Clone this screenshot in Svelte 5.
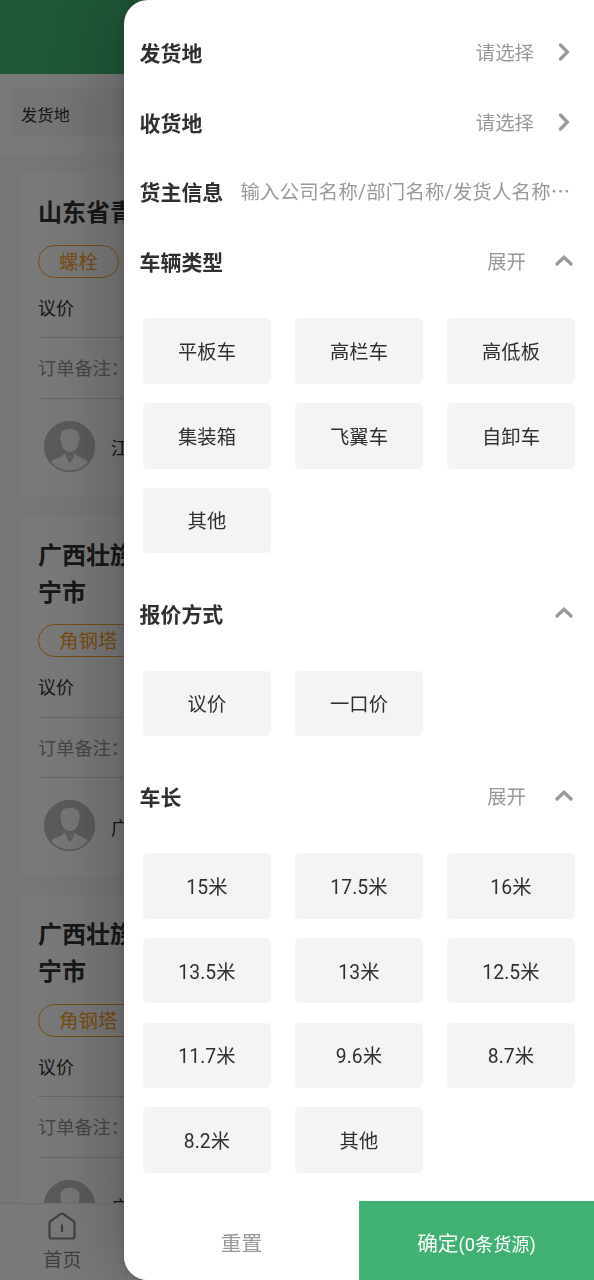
<script>
  let orders = [
    { id: 1, title: ['山东省青'], goods: '螺栓', owner: '江' },
    { id: 2, title: ['广西壮族', '宁市'], goods: '角钢塔', owner: '广' },
    { id: 3, title: ['广西壮族', '宁市'], goods: '角钢塔', owner: '广' },
  ];

  let places = ['发货地', '收货地'];

  let groups = $state([
    {
      name: '车辆类型',
      expand: true,
      options: ['平板车', '高栏车', '高低板', '集装箱', '飞翼车', '自卸车', '其他'],
      picked: -1,
    },
    { name: '报价方式', expand: false, options: ['议价', '一口价'], picked: -1 },
    {
      name: '车长',
      expand: true,
      options: ['15米', '17.5米', '16米', '13.5米', '13米', '12.5米', '11.7米', '9.6米', '8.7米', '8.2米', '其他'],
      picked: -1,
    },
  ]);

  let total = $state(0);

  function pick(group, i) {
    group.picked = group.picked === i ? -1 : i;
  }

  function reset() {
    groups.forEach((g) => (g.picked = -1));
  }
</script>

<div class="page">
  <div class="nav"></div>
  <div class="search">
    <div class="search-box">发货地</div>
  </div>

  <div class="list">
    {#each orders as order (order.id)}
      <div class="card">
        <div class="card-title">
          {#each order.title as line}
            <div>{line}</div>
          {/each}
        </div>
        <div class="tag">{order.goods}</div>
        <div class="card-row price">议价</div>
        <div class="card-row note">订单备注：</div>
        <div class="owner">
          <svg class="avatar" viewBox="0 0 50 50">
            <circle cx="25" cy="25" r="25" fill="#b9b9b9" />
            <path d="M25.500 7.500c6.500 0 9.700 3.600 9.400 9.500-.4 7.500-3.900 13.500-9.400 13.500S16.500 24.500 16.100 17c-.3-5.900 2.900-9.500 9.400-9.500z" fill="#f1f1f1" />
            <path d="M20 31.500q-1.500 3-6 4.500-5 1.700-7.200 4.500A24 24 0 0 0 43.500 40.500q-2.400-3-7-4.500-4.500-1.500-6.500-4.500l-4.700 1.500z" fill="#f1f1f1" />
            <path d="M20 31l3.500 8 1.500-4.500h1l1.500 4.500 3-8-2.500 1.500h-5zM24.500 34h2l1 4.500-2 3-2-3z" fill="#b9b9b9" />
            <circle cx="25" cy="25" r="24.300" fill="none" stroke="#b9b9b9" stroke-width="1.400" />
          </svg>
          <span>{order.owner}</span>
        </div>
      </div>
    {/each}
  </div>

  <div class="tabbar">
    <div class="tab">
      <svg viewBox="0 0 28 28">
        <path d="M2.700 9L12.800 1.900q1.200-.8 2.400 0L25.300 9q1.200.8 1.200 2.200V24.500q0 2-2 2h-21q-2 0-2-2V11.200Q1.500 9.800 2.700 9zM14 12.500v7.500" />
      </svg>
      <span>首页</span>
    </div>
  </div>
</div>

<div class="mask"></div>

<div class="drawer">
  <div class="drawer-body">
    {#each places as place}
      <div class="row">
        <span class="label">{place}</span>
        <span class="value">请选择</span>
        <svg class="arrow" viewBox="0 0 20 20"><path d="M6.500 3l6.800 7-6.800 7" /></svg>
      </div>
    {/each}

    <div class="row">
      <span class="label">货主信息</span>
      <span class="placeholder">输入公司名称/部门名称/发货人名称<i>…</i></span>
    </div>

    {#each groups as group}
      <div class="row">
        <span class="label">{group.name}</span>
        {#if group.expand}
          <span class="value toggle">展开</span>
        {/if}
        <svg class="arrow" viewBox="0 0 20 20"><path d="M3 13l7-6.800 7 6.800" /></svg>
      </div>
      <div class="chips">
        {#each group.options as option, i}
          <button type="button" class="chip" class:active={group.picked === i} onclick={() => pick(group, i)}>{option}</button>
        {/each}
      </div>
    {/each}
  </div>

  <div class="footer">
    <button type="button" class="reset" onclick={reset}>重置</button>
    <button type="button" class="confirm">确定<small>({total}条货源)</small></button>
  </div>
</div>

<style>
  :global(body) {
    margin: 0;
    overflow: hidden;
    font-family: Roboto, 'Noto Sans CJK SC', sans-serif;
    color: #303030;
  }

  button {
    border: 0;
    padding: 0;
    font: inherit;
    color: inherit;
  }

  .page {
    display: flex;
    flex-direction: column;
    height: 1280px;
    background: #f1f1f2;
    white-space: nowrap;
  }

  .nav {
    flex: none;
    height: 74px;
    background: #40b172;
  }

  .search {
    flex: none;
    height: 80px;
    box-sizing: border-box;
    padding: 15px 13px;
    background: #f6f6f6;
  }
  .search-box {
    height: 48px;
    line-height: 53px;
    padding-left: 8px;
    border-radius: 4px;
    background: #eee;
    font-size: 16.3px;
  }

  .list {
    flex: 1;
    min-height: 0;
    overflow: hidden;
    display: flex;
    flex-direction: column;
    gap: 19.5px;
    padding: 19px 19px 0;
  }

  .card {
    flex: none;
    padding: 22px 19px 0;
    border-radius: 6px;
    background: #f6f6f6;
  }
  .card-title {
    font-size: 24px;
    font-weight: 700;
    line-height: 37px;
  }
  .tag {
    display: inline-block;
    height: 31px;
    line-height: 34px;
    margin-top: 12.5px;
    padding: 0 20px;
    border: 1px solid #f39a2b;
    border-radius: 17px;
    color: #f39a2b;
    font-size: 19.5px;
    vertical-align: top;
  }
  .card-row {
    height: 59.5px;
    line-height: 62px;
    border-bottom: 1px solid #d2d2d2;
  }
  .price {
    line-height: 61px;
    font-size: 17.9px;
  }
  .note {
    color: #909090;
    font-size: 18.2px;
  }
  .owner {
    display: flex;
    align-items: center;
    gap: 16px;
    height: 97.500px;
    padding-left: 6px;
    font-size: 17.7px;
  }
  .avatar {
    width: 51px;
    height: 51px;
    margin-bottom: 2px;
  }

  .tabbar {
    flex: none;
    height: 77px;
    box-sizing: border-box;
    padding: 8px 43px 0;
    border-top: 1px solid #e3e3e3;
    background: #f6f6f6;
  }
  .tab {
    display: inline-flex;
    flex-direction: column;
    align-items: center;
    gap: 8px;
    color: #848484;
    font-size: 19.3px;
    line-height: 25px;
  }
  .tab svg {
    width: 28px;
    height: 28px;
    fill: none;
    stroke: #848484;
    stroke-width: 2.2;
  }

  .mask {
    position: fixed;
    inset: 0;
    background: rgba(0, 0, 0, 0.51);
  }

  .drawer {
    position: fixed;
    top: 0;
    right: 0;
    bottom: 0;
    width: 470px;
    display: flex;
    flex-direction: column;
    border-radius: 24px 0 0 24px;
    overflow: hidden;
    background: #fff;
    box-shadow:
      0 0 12px rgba(0, 0, 0, 0.15),
      0 0 90px rgba(0, 0, 0, 0.3);
  }
  .drawer-body {
    flex: 1;
    min-height: 0;
    padding: 17px 20px 0 15.6px;
  }

  .row {
    display: flex;
    align-items: center;
    height: 69.7px;
  }
  .label {
    font-size: 20.9px;
    font-weight: 700;
  }
  .value {
    margin-left: auto;
    margin-right: 20px;
    padding-bottom: 1px;
    color: #999;
    font-size: 19.4px;
  }
  .toggle {
    margin-right: 28px;
  }
  .placeholder {
    margin-left: 17.3px;
    padding-bottom: 1px;
    color: #999;
    font-size: 19.4px;
    letter-spacing: 0.2px;
    white-space: nowrap;
  }
  .placeholder i {
    font-family: 'Noto Sans CJK SC', sans-serif;
    font-style: normal;
  }
  .arrow {
    flex: none;
    width: 20px;
    height: 20px;
    fill: none;
    stroke: #999;
    stroke-width: 3.3;
    stroke-linecap: round;
  }
  .label + .arrow {
    margin-left: auto;
  }

  .chips {
    display: grid;
    grid-template-columns: repeat(3, 128px);
    grid-auto-rows: 65.5px;
    gap: 19.2px 24px;
    padding: 22.6px 0 25px 3.4px;
  }
  .chip {
    border-radius: 5px;
    background: #f4f4f4;
    font-size: 19.3px;
    letter-spacing: 0.1px;
  }
  .chip.active {
    background: #e3f5ea;
    color: #40b172;
  }

  .footer {
    flex: none;
    display: grid;
    grid-template-columns: 1fr 1fr;
    height: 79px;
    font-size: 20.7px;
  }
  .reset {
    padding-top: 2px;
    background: #fff;
    color: #999;
  }
  .confirm {
    padding-top: 2px;
    background: #40b172;
    color: #fff;
  }
  .confirm small {
    font-size: 18.2px;
  }
</style>
